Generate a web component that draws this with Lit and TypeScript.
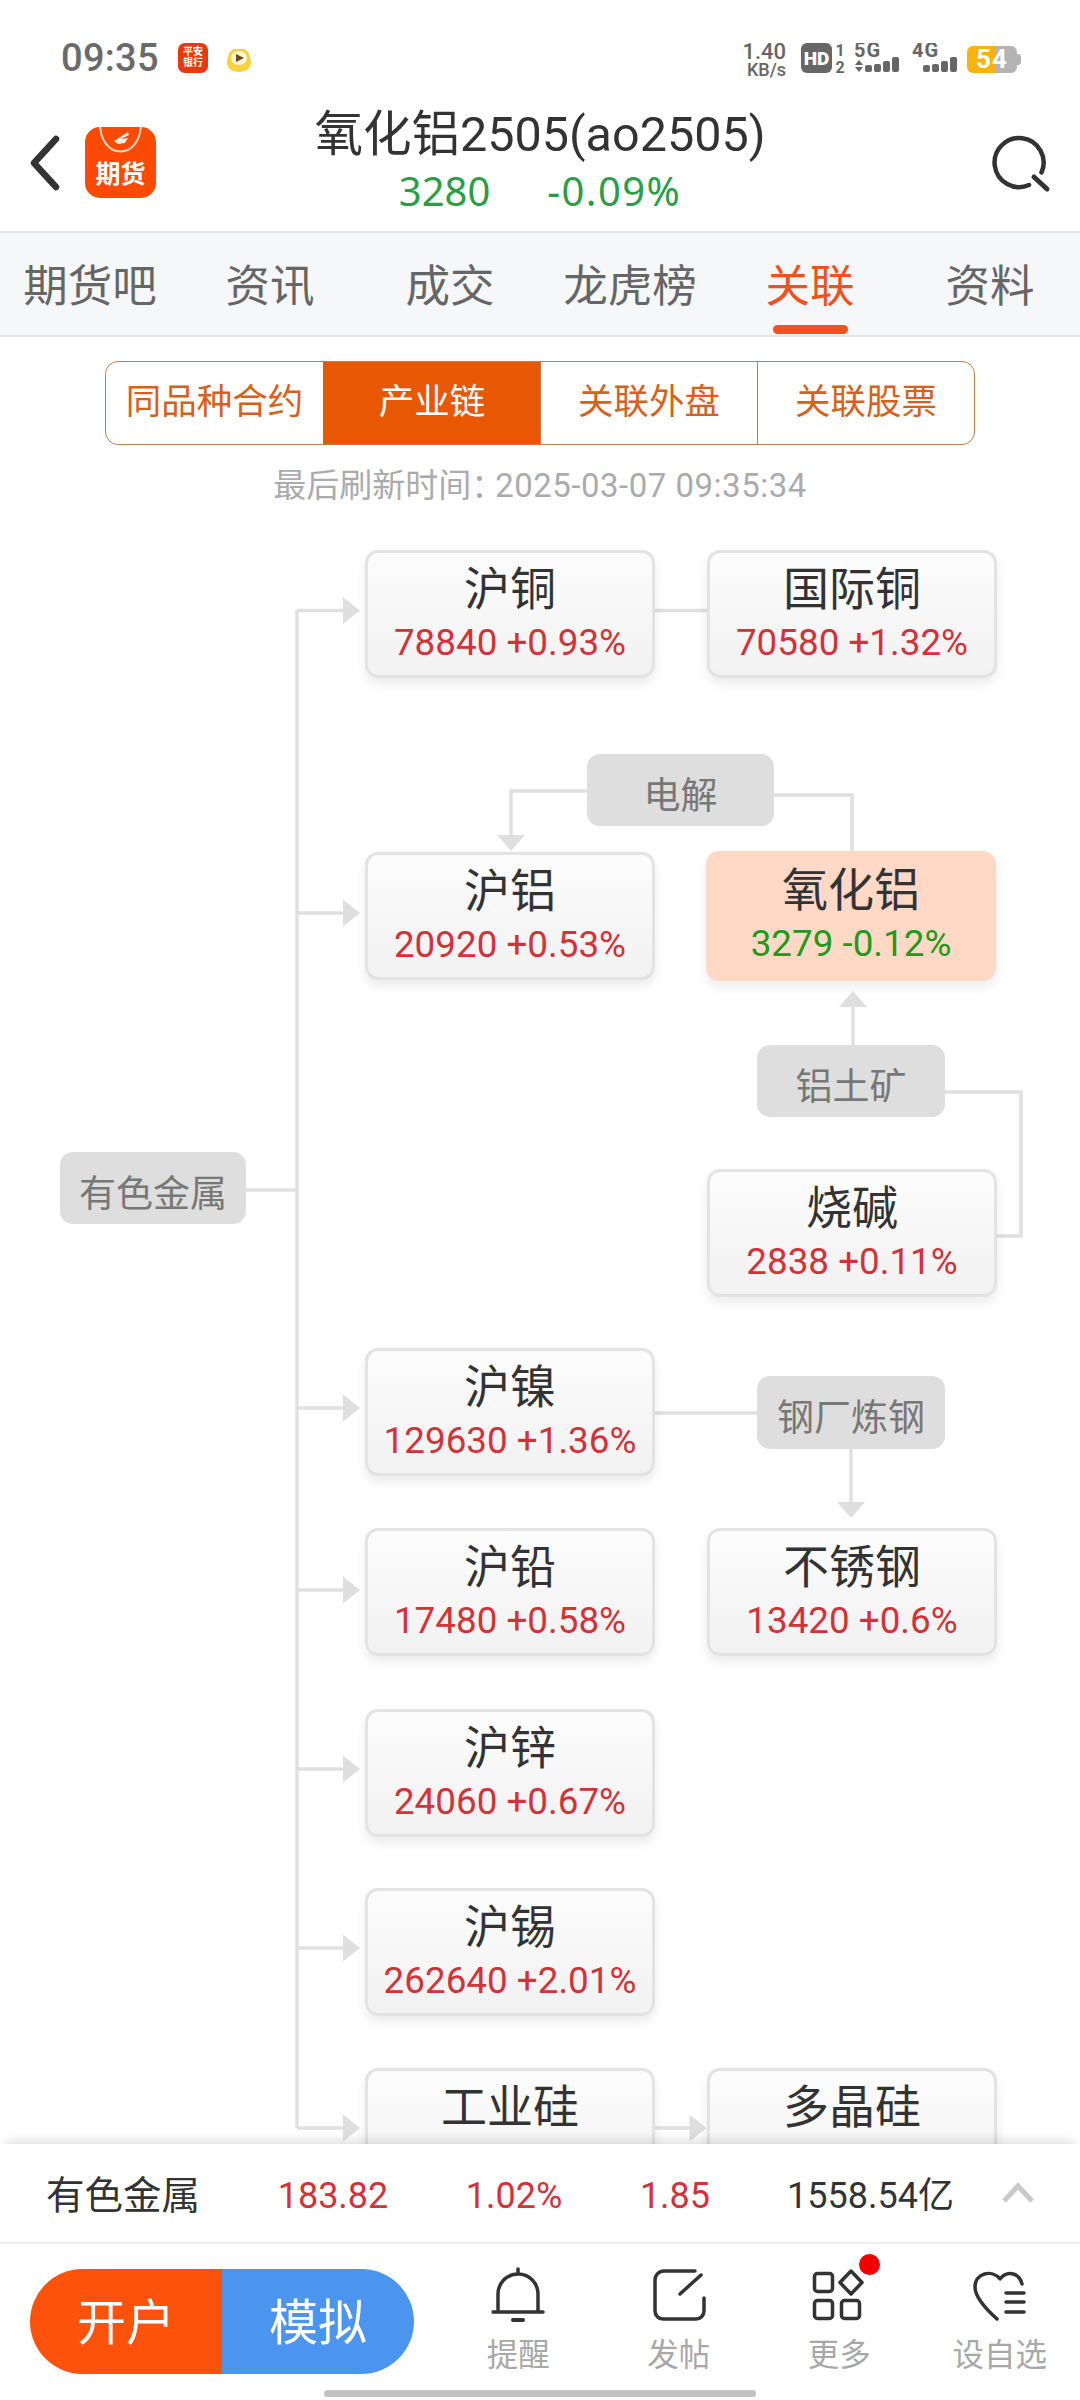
import { LitElement, html, css, svg } from "lit";
import { customElement } from "lit/decorators.js";

type Node = { n: string; v?: string; x: number; y: number; tone?: string; hot?: boolean };
type Tag = { n: string; x: number; y: number; w: number; h: number };

const TOP = 505;
const nodes: Node[] = [
  { n: "沪铜", v: "78840 +0.93%", x: 365, y: 550 },
  { n: "国际铜", v: "70580 +1.32%", x: 707, y: 550 },
  { n: "沪铝", v: "20920 +0.53%", x: 365, y: 852 },
  { n: "氧化铝", v: "3279 -0.12%", x: 706, y: 851, hot: true, tone: "down" },
  { n: "烧碱", v: "2838 +0.11%", x: 707, y: 1169 },
  { n: "沪镍", v: "129630 +1.36%", x: 365, y: 1348 },
  { n: "沪铅", v: "17480 +0.58%", x: 365, y: 1528 },
  { n: "不锈钢", v: "13420 +0.6%", x: 707, y: 1528 },
  { n: "沪锌", v: "24060 +0.67%", x: 365, y: 1709 },
  { n: "沪锡", v: "262640 +2.01%", x: 365, y: 1888 },
  { n: "工业硅", x: 365, y: 2068 },
  { n: "多晶硅", x: 707, y: 2068 },
];
const tags: Tag[] = [
  { n: "有色金属", x: 60, y: 1152, w: 186, h: 72 },
  { n: "电解", x: 587, y: 754, w: 187, h: 72 },
  { n: "铝土矿", x: 757, y: 1045, w: 188, h: 72 },
  { n: "钢厂炼钢", x: 757, y: 1376, w: 188, h: 73 },
];
const lines = [
  `M246 1190H297`, `M297 610V2128`,
  `M297 610.500H350`, `M297 913H350`, `M297 1408H350`, `M297 1590H350`, `M297 1769H350`, `M297 1948H350`, `M297 2128H350`,
  `M655 610.500H707`,
  `M587 791H511V840`, `M774 795H852V851`,
  `M853 1045V1000`,
  `M945 1092H1021V1236H996`,
  `M655 1413H757`,
  `M851 1449V1505`,
  `M655 2128H695`,
];
const arrowR = (x: number, y: number) => `M${x} ${y - 13.5}L${x + 17} ${y}L${x} ${y + 13.5}Z`;
const arrowU = (x: number, y: number) => `M${x} ${y}L${x + 14} ${y + 16}L${x - 14} ${y + 16}Z`;
const arrowD = (x: number, y: number) => `M${x} ${y}L${x + 14} ${y - 16}L${x - 14} ${y - 16}Z`;
const arrows = [
  ...[610.5, 913, 1408, 1590, 1769, 1948, 2128].map((y) => arrowR(343, y)),
  arrowR(689.5, 2128),
  arrowD(511, 851),
  arrowU(853, 991),
  arrowD(851, 1518),
];

const tabs = ["期货吧", "资讯", "成交", "龙虎榜", "关联", "资料"];
const segs = ["同品种合约", "产业链", "关联外盘", "关联股票"];

const bell = svg`<path d="M10 46V28a20 20 0 0 1 40 0V46M5 46H55M30 3V8"/><path d="M25 54H35" stroke-width="4"/>`;
const post = svg`<path d="M46 5H15a9 9 0 0 0-9 9V45a8 8 0 0 0 8 8H47a8 8 0 0 0 8-8V32"/><path d="M31 28L52 9"/>`;
const more = svg`<rect x="5.5" y="7.5" width="18" height="18" rx="3"/><rect x="5.5" y="34.5" width="18" height="18" rx="3"/><rect x="32.5" y="34.5" width="18" height="18" rx="3"/><path d="M42 5L53 16.500L42 28L31 16.500Z"/>`;
const heart = svg`<path d="M52 18C50 8 38 3 30 13C22 3 5 7 5 21C5 31 17 44 27 53"/><path d="M36 27H54M36 36H54M36 46H54"/>`;
const tools = [
  { l: "提醒", i: bell },
  { l: "发帖", i: post },
  { l: "更多", i: more, dot: true },
  { l: "设自选", i: heart },
];

@customElement("app-root")
export class AppRoot extends LitElement {
  static styles = css`
    :host { display: block; width: 1080px; height: 2400px; background: #fff; overflow: hidden;
      font-family: Roboto, "Noto Sans CJK SC", sans-serif; color: #333; }
    .page { height: 2400px; display: flex; flex-direction: column; }

    .status { height: 104px; flex: none; display: flex; align-items: flex-start; padding: 43px 0 0 61px; box-sizing: border-box; color: #666; }
    .time { font-size: 38px; font-weight: 500; line-height: 30px; width: 117px; color: #6a6a6a; letter-spacing: .3px; }
    .bank { width: 30px; height: 30px; border-radius: 7px; background: #e83a10; color: #fff; font-size: 10px; line-height: 11px; font-weight: 700; text-align: center; padding-top: 3px; box-sizing: border-box; }
    .tiger { margin: 4px 0 0 18px; width: 26px; height: 26px; }
    .sright { margin-left: auto; display: flex; align-items: flex-start; padding-right: 59px; }
    .speed { width: 46px; text-align: right; font-weight: 500; line-height: 1; margin-top: -2px; }
    .speed div:first-child { font-size: 22px; height: 20px; }
    .speed div:last-child { font-size: 18px; }
    .hd { margin-left: 15px; width: 31px; height: 30px; background: #666; border-radius: 6px; color: #fff; font-size: 19px; font-weight: 900; display: flex; align-items: center; justify-content: center; }
    .sim { width: 12px; margin: 0 8px 0 2px; font-size: 16px; font-weight: 700; line-height: 15px; text-align: center; }
    .net { width: 46px; height: 30px; }
    .net + .net { margin-left: 12px; }
    .batt { margin-left: 9px; position: relative; width: 54px; height: 27px; margin-top: 3px; display: flex; }
    .batt i { width: 28px; background: #f7b40f; border-radius: 6px 0 0 6px; }
    .batt b { width: 22px; background: #b4b4b4; border-radius: 0 6px 6px 0; }
    .batt u { width: 4px; height: 11px; background: #b4b4b4; align-self: center; border-radius: 0 3px 3px 0; }
    .batt span { position: absolute; left: 9px; top: -1px; color: #fff; font-size: 26px; line-height: 29px; font-weight: 700; letter-spacing: 1px; }

    .head { height: 127px; flex: none; position: relative; display: flex; align-items: flex-start; padding-left: 28px; box-sizing: border-box; }
    .back { width: 36px; height: 60px; margin-top: 30px; }
    .logo { position: relative; margin: 23px 0 0 21px; width: 71px; height: 71px; border-radius: 15px; background: #fb4a04; overflow: hidden; color: #fff; font-size: 25px; font-weight: 700; line-height: 25px; text-align: center; display: flex; flex-direction: column; justify-content: flex-end; padding-bottom: 11px; box-sizing: border-box; }
    .logo svg { position: absolute; left: 0; top: 0; }
    .ttl { position: absolute; left: 0; right: 0; top: 0; text-align: center; }
    .ttl h1 { margin: 0; padding-top: 1px; font-size: 48.500px; font-weight: 400; line-height: 60px; color: #333; }
    .ttl p { margin: 2px 0 0; font-family: "Noto Sans", sans-serif; font-size: 40px; line-height: 48px; color: #2a9e46; display: flex; justify-content: center; gap: 57px; }
    .ttl p span:last-child { letter-spacing: 1.400px; }
    .search { position: absolute; right: 30px; top: 24px; width: 60px; height: 60px; overflow: visible; }

    .tabs { height: 106px; flex: none; box-sizing: border-box; display: grid; grid-template-columns: repeat(6, 180px); background: #f6f7f9; border-top: 2px solid #e5e5e5; border-bottom: 2px solid #e5e5e5; }
    .tab { position: relative; font-size: 44.500px; line-height: 108px; height: 102px; text-align: center; color: #666; }
    .tab.on { color: #f0511e; }
    .tab.on::after { content: ""; position: absolute; left: 53px; width: 75px; height: 9px; bottom: 1px; border-radius: 5px; background: #f4511e; }

    .segs { flex: none; margin: 24px 105px 0; height: 84px; box-sizing: border-box; border: 1.500px solid #c57d45; border-radius: 13px; display: grid; grid-template-columns: repeat(4, 1fr); overflow: hidden; }
    .seg { font-size: 35.500px; color: #d9601a; text-align: center; line-height: 80px; border-left: 1.500px solid #c57d45; }
    .seg:first-child { border-left: 0; }
    .seg.on { background: #e85804; color: #fff; border-left-color: #e85804; }
    .stamp { flex: none; height: 38px; margin-top: 22px; font-size: 33px; line-height: 38px; text-align: center; color: #ababab; }
    .stamp span { margin-left: -9px; letter-spacing: .500px; }

    .chart { flex: 1; min-height: 0; position: relative; overflow: hidden; }
    .chart > svg { position: absolute; left: 0; top: 0; }
    .node { position: absolute; width: 290px; height: 128px; box-sizing: border-box; text-align: center; background: linear-gradient(#fcfcfc, #f2f2f2); border: 3px solid #e3e3e3; border-radius: 13px; box-shadow: 0 6px 12px rgba(0, 0, 0, .08); }
    .node.hot { background: #ffd9c6; border-color: #ffd9c6; height: 130px; }
    .node b { display: block; font-weight: 400; font-size: 46px; line-height: 60px; margin-top: 6px; color: #333; }
    .node span { display: block; font-size: 36.800px; line-height: 46px; margin-top: 1px; color: #d23238; }
    .node span.down { color: #219a1b; }
    .tag { position: absolute; box-sizing: border-box; padding-top: 5px; background: #dedede; border-radius: 13px; color: #777; font-size: 37px; text-align: center; display: flex; align-items: center; justify-content: center; }

    .bar { flex: none; height: 100px; box-sizing: border-box; background: #fff; position: relative; font-size: 36px; line-height: 104px; border-bottom: 2px solid #eee; box-shadow: 0 -8px 12px -6px rgba(0, 0, 0, .16); display: grid; grid-template-columns: 234px 198px 164px 158px 244px 82px; }
    .bar .name { padding-left: 46px; font-size: 38.500px; }
    .bar .r { color: #d23238; text-align: center; }
    .bar .vol { padding-left: 33px; color: #333; }
    .chev { width: 40px; height: 30px; margin-top: 34px; }

    .foot { flex: none; height: 156px; box-sizing: border-box; background: #fff; display: flex; align-items: flex-start; padding: 25px 0 0 30px; position: relative; }
    .cta { display: flex; width: 384px; height: 105px; border-radius: 53px; overflow: hidden; color: #fff; font-size: 49px; line-height: 110px; text-align: center; flex: none; }
    .cta div:first-child { width: 192px; background: #fc520c; }
    .cta div:last-child { flex: 1; background: #4c95ef; }
    .tools { display: grid; grid-template-columns: repeat(4, 160.500px); margin-left: 24px; margin-top: -3px; }
    .tool { position: relative; display: flex; flex-direction: column; align-items: center; font-size: 31.500px; line-height: 40px; color: #a8a8a8; }
    .tool svg { width: 60px; height: 60px; fill: none; stroke: #333; stroke-width: 3.500; stroke-linecap: round; stroke-linejoin: round; }
    .tool i { position: absolute; left: 100px; top: -12px; width: 21px; height: 21px; border-radius: 50%; background: #f40000; }
    .tool em { font-style: normal; margin-top: 10px; }
    .pill { position: absolute; left: 324px; bottom: 3px; width: 432px; height: 7px; border-radius: 4px; background: #c2c2c2; }
  `;

  render() {
    return html`<div class="page">
      <div class="status">
        <div class="time">09:35</div>
        <div class="bank">平安<br />银行</div>
        <svg class="tiger" viewBox="0 0 26 26"><path d="M3 6L7 2L19 2L23 6L25 14Q25 25 13 25Q1 25 1 14Z" fill="#f6d33c"/><ellipse cx="13" cy="11" rx="8" ry="7" fill="#fff7d8"/><path d="M10 7L18 11L10 15Z" fill="#6b4a1e"/></svg>
        <div class="sright">
          <div class="speed"><div>1.40</div><div>KB/s</div></div>
          <div class="hd">HD</div>
          <div class="sim"><div>1</div><div style="margin-top:2px">2</div></div>
          ${this.net("5G", true)}${this.net("4G", false)}
          <div class="batt"><i></i><b></b><u></u><span>54</span></div>
        </div>
      </div>

      <div class="head">
        <svg class="back" viewBox="0 0 36 60"><path d="M28 5L6 29L28 53" fill="none" stroke="#333" stroke-width="6.500" stroke-linecap="round" stroke-linejoin="round"/></svg>
        <div class="logo">
          <svg width="71" height="71" viewBox="0 0 71 71"><path d="M15 -4C15 34 56 34 56 -4" fill="none" stroke="#ffd9c4" stroke-width="2"/><path d="M29 14L43 5L44 8L36 12L43 11L40 16L33 17Z" fill="#fff" opacity=".9"/></svg>
          期货
        </div>
        <div class="ttl">
          <h1>氧化铝2505(ao2505)</h1>
          <p><span>3280</span><span>-0.09%</span></p>
        </div>
        <svg class="search" viewBox="0 0 60 60"><path d="M39 57A24.500 24.500 0 1 1 51.500 44.500" fill="none" stroke="#333" stroke-width="4.500" stroke-linecap="round"/><path d="M44 49L57 61" fill="none" stroke="#333" stroke-width="5" stroke-linecap="round"/></svg>
      </div>

      <div class="tabs">${tabs.map((t) => html`<div class="tab ${t === "关联" ? "on" : ""}">${t}</div>`)}</div>

      <div class="segs">${segs.map((s) => html`<div class="seg ${s === "产业链" ? "on" : ""}">${s}</div>`)}</div>
      <div class="stamp">最后刷新时间：<span>2025-03-07 09:35:34</span></div>

      <div class="chart">
        <svg width="1080" height="1700" viewBox="0 ${TOP} 1080 1700">
          ${lines.map((d) => svg`<path d=${d} fill="none" stroke="#e0e0e0" stroke-width="3.500"/>`)}
          ${arrows.map((d) => svg`<path d=${d} fill="#dfdfdf"/>`)}
        </svg>
        ${nodes.map((n) => html`<div class="node ${n.hot ? "hot" : ""}" style="left:${n.x}px;top:${n.y - TOP}px">
          <b>${n.n}</b>${n.v ? html`<span class=${n.tone ?? ""}>${n.v}</span>` : ""}
        </div>`)}
        ${tags.map((t) => html`<div class="tag" style="left:${t.x}px;top:${t.y - TOP}px;width:${t.w}px;height:${t.h}px">${t.n}</div>`)}
      </div>

      <div class="bar">
        <div class="name">有色金属</div>
        <div class="r">183.82</div>
        <div class="r">1.02%</div>
        <div class="r">1.85</div>
        <div class="vol">1558.54亿</div>
        <svg class="chev" viewBox="0 0 40 30"><path d="M6 23L20 8L34 23" fill="none" stroke="#c9c9c9" stroke-width="5"/></svg>
      </div>

      <div class="foot">
        <div class="cta"><div>开户</div><div>模拟</div></div>
        <div class="tools">
          ${tools.map((t) => html`<div class="tool"><svg viewBox="0 0 60 60">${t.i}</svg>${t.dot ? html`<i></i>` : ""}<em>${t.l}</em></div>`)}
        </div>
        <div class="pill"></div>
      </div>
    </div>`;
  }

  net(label: string, arrows: boolean) {
    return html`<svg class="net" viewBox="0 0 46 30">
      <text x="0" y="14" font-size="20" letter-spacing="1" font-weight="700" fill="#666" font-family="Roboto, sans-serif">${label}</text>
      ${arrows ? svg`<path d="M1 22L5 17L9 22ZM1 24L9 24L5 29Z" fill="#666"/>` : ""}
      <rect x="11" y="22" width="7" height="7" rx="2" fill="#666"/><rect x="20" y="21" width="7" height="8" rx="2" fill="#666"/><rect x="29" y="18" width="7" height="11" rx="2" fill="#666"/><rect x="38" y="14" width="7" height="15" rx="2" fill="#666"/>
    </svg>`;
  }
}
